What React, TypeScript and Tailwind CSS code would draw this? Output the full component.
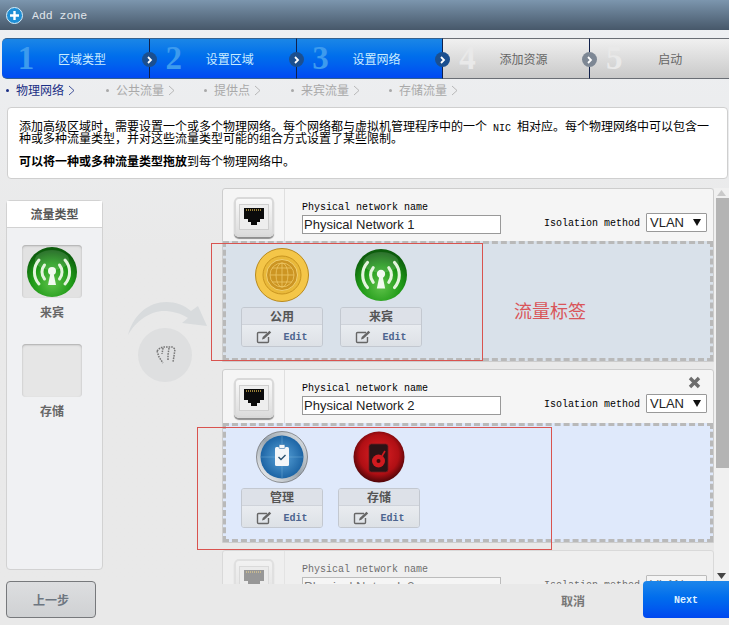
import React from "react";

const cjk = "font-['Noto_Sans_CJK_SC','Liberation_Sans',sans-serif]";
const mono = "font-['Liberation_Mono','Noto_Sans_CJK_SC',monospace]";

function Chevron({ gray }: { gray?: boolean }) {
  return (
    <span className={`absolute right-[-8px] top-[13px] z-10 flex h-[15px] w-[15px] items-center justify-center rounded-full ${gray ? "bg-[#7d8794]" : "bg-[#1b4f8f]"}`}>
      <svg width="7" height="8" viewBox="0 0 7 8"><path d="M2 1l3 3-3 3" fill="none" stroke="#fff" strokeWidth="1.8" /></svg>
    </span>
  );
}

function Step({ n, label, active, first, last }: { n: number; label: string; active?: boolean; first?: boolean; last?: boolean }) {
  return (
    <div className={`relative flex h-[41px] items-center border-y ${active ? "border-y-[#34618f] bg-gradient-to-b from-[#1b86e6] to-[#0049f2]" : "border-y-[#6a6e75] bg-gradient-to-b from-[#f0f0f0] to-[#c9c9c9]"} ${first ? "w-[148px] rounded-l-[5px]" : ""} ${last ? "w-[139px]" : ""} ${!first && !last ? "w-[147px]" : ""} ${last ? "" : "border-r border-r-[#10204a]"}`}>
      <span className={`w-[48px] text-center font-['Liberation_Serif',serif] text-[33px] font-bold leading-none ${active ? "text-[#3d9bee]" : "text-[#e9e9e9]"}`}>{n}</span>
      <span className={`w-[64px] text-center text-[12px] ${cjk} ${active ? "text-[#c9ecff]" : "text-[#666]"}`}>{label}</span>
      {!last && <Chevron gray={!active} />}
    </div>
  );
}

function Crumb({ label, active, w }: { label: string; active?: boolean; w: string }) {
  return (
    <div className={`flex items-center ${w} ${cjk} text-[12px] ${active ? "text-[#1b2f85]" : "text-[#a9a9a9]"}`}>
      <span className="mr-[7px] h-[3px] w-[3px] rounded-full bg-current" />
      <span>{label}</span>
      <svg className="ml-[4px]" width="7" height="11" viewBox="0 0 7 11"><path d="M1 1l5 4.5L1 10" fill="none" stroke="currentColor" strokeWidth="0.8" /></svg>
    </div>
  );
}

function GreenIcon({ size = 50 }: { size?: number }) {
  return (
    <svg width={size} height={size} viewBox="0 0 50 50">
      <defs>
        <radialGradient id="gr" cx="50%" cy="72%" r="65%"><stop offset="0%" stopColor="#5fc24a" /><stop offset="60%" stopColor="#1f9a17" /><stop offset="100%" stopColor="#0c5d0c" /></radialGradient>
      </defs>
      <circle cx="25" cy="25" r="25" fill="url(#gr)" />
      <ellipse cx="25" cy="13" rx="17" ry="10" fill="#fff" opacity="0.14" />
      <g fill="none" stroke="#e4f4dd" strokeLinecap="round">
        <path d="M17.5 32a11 11 0 0 1 0-14M32.5 18a11 11 0 0 1 0 14" strokeWidth="3" />
        <path d="M12 37a18 18 0 0 1 0-24M38 13a18 18 0 0 1 0 24" strokeWidth="3" />
      </g>
      <circle cx="25" cy="24" r="4" fill="#f2faef" />
      <path d="M23.5 26h3l2.5 12h-8z" fill="#f2faef" />
    </svg>
  );
}

function GoldIcon() {
  return (
    <svg width="54" height="54" viewBox="0 0 54 54">
      <circle cx="27" cy="27" r="26.5" fill="#f4c648" stroke="#b98a1e" strokeWidth="1" />
      <circle cx="27" cy="27" r="19" fill="#e9b93a" stroke="#c8941f" strokeWidth="1" />
      <circle cx="27" cy="27" r="15.5" fill="#cc9523" stroke="#f2d071" strokeWidth="1" />
      <g fill="none" stroke="#eec766" strokeWidth="0.8">
        <circle cx="27" cy="27" r="12" />
        <ellipse cx="27" cy="27" rx="6" ry="12" />
        <path d="M27 15v24M15 27h24M17 20h20M17 34h20" />
      </g>
    </svg>
  );
}

function BlueIcon() {
  return (
    <svg width="52" height="52" viewBox="0 0 52 52">
      <defs>
        <radialGradient id="bl" cx="50%" cy="50%" r="55%"><stop offset="0%" stopColor="#5aa4da" /><stop offset="100%" stopColor="#175e9f" /></radialGradient>
        <linearGradient id="si" x1="0" y1="1" x2="1" y2="0"><stop offset="0%" stopColor="#ffffff" /><stop offset="50%" stopColor="#9aa4ad" /><stop offset="100%" stopColor="#e8ecef" /></linearGradient>
      </defs>
      <circle cx="26" cy="26" r="25.5" fill="url(#si)" stroke="#555" strokeWidth="0.6" />
      <circle cx="26" cy="26" r="21.5" fill="url(#bl)" />
      <path d="M5 26h42M26 5v42" stroke="#8cc2e6" strokeWidth="0.6" opacity="0.6" />
      <rect x="19" y="16" width="14" height="19" rx="1.5" fill="#f3f6f9" />
      <rect x="23" y="13.5" width="6" height="4" rx="1" fill="#f3f6f9" stroke="#2c6ea8" strokeWidth="0.6" />
      <path d="M22.5 26l2.5 2.5 4.5-4.5" fill="none" stroke="#29506f" strokeWidth="1.4" />
    </svg>
  );
}

function RedIcon() {
  return (
    <svg width="52" height="52" viewBox="0 0 52 52">
      <defs>
        <radialGradient id="rd" cx="50%" cy="45%" r="55%"><stop offset="0%" stopColor="#e02226" /><stop offset="70%" stopColor="#b00f14" /><stop offset="100%" stopColor="#4e0508" /></radialGradient>
      </defs>
      <circle cx="26" cy="26" r="25.5" fill="url(#rd)" />
      <rect x="16" y="13" width="19" height="28" rx="2.5" fill="#2b1316" stroke="#6e1c20" strokeWidth="0.8" />
      <circle cx="25.5" cy="30" r="6.5" fill="#d01a1f" />
      <circle cx="25.5" cy="30" r="2" fill="#3a0a0c" />
      <path d="M29 25l3-5" stroke="#d01a1f" strokeWidth="1.6" />
    </svg>
  );
}

function PortTile({ faded }: { faded?: boolean }) {
  return (
    <div className="flex h-[40px] w-[40px] items-center justify-center rounded-[5px] border-2 border-[#d9d9d9] bg-gradient-to-b from-[#fafafa] to-[#dcdcdc] shadow-[0_2px_1px_#8e8e8e]">
      <div className="flex h-[26px] w-[30px] items-center justify-center border border-[#cfcfcf] bg-[#eeeeee]">
        <svg width="22" height="18" viewBox="0 0 22 18">
          <path d="M1 0h20v11h-4v3h-3v3H8v-3H5v-3H1z" fill={faded ? "#555" : "#0b0b0b"} />
          <path d="M3 2h16" stroke="#c9a848" strokeWidth="1.4" strokeDasharray="1 1" />
        </svg>
      </div>
    </div>
  );
}

function EditGlyph() {
  return (
    <svg width="17" height="14" viewBox="0 0 17 14">
      <path d="M11 2.5H2.5a1 1 0 0 0-1 1v8a1 1 0 0 0 1 1h9a1 1 0 0 0 1-1V7" fill="none" stroke="#666" strokeWidth="1.4" />
      <path d="M6 9.5l.7-2.4L13.5 0.8l1.7 1.7L8.4 8.8z" fill="#666" />
    </svg>
  );
}

function Tag({ icon, label, tight }: { icon: React.ReactNode; label: string; tight?: boolean }) {
  return (
    <div className="flex w-[82px] flex-col items-center">
      <div className="flex h-[54px] w-full items-center justify-center">{icon}</div>
      <div className={`${tight ? "mt-[4px]" : "mt-[5px]"} w-full overflow-hidden rounded-[3px] border border-[#c3c8d0]`}>
        <div className={`flex h-[17px] items-center justify-center border-b border-b-[#cfd3da] bg-[#dde1e8] text-[12px] font-bold text-[#555] ${cjk}`}>{label}</div>
        <div className="flex h-[21px] items-center justify-center gap-[10px] bg-gradient-to-b from-[#e9ecf0] to-[#dde1e6] pt-[3px]">
          <EditGlyph />
          <span className={`text-[10px] font-bold text-[#4c648f] ${mono}`}>Edit</span>
        </div>
      </div>
    </div>
  );
}

function Network({ name, tags, close, dropBg, gap, faded, dropH, topH, pb }: { name: string; tags?: React.ReactNode; close?: boolean; dropBg?: string; gap?: string; faded?: boolean; dropH?: string; topH: string; pb: string }) {
  return (
    <div className={`relative mb-[7px] w-[492px] rounded-t-[3px] border border-[#cdcdcd] bg-[#f5f5f5] ${faded ? "opacity-55" : ""}`}>
      <div className={`flex ${topH}`}>
        <div className="flex w-[62px] justify-center border-r border-r-[#dfdfdf] pt-[8px]"><PortTile faded={faded} /></div>
        <div className={`flex flex-1 items-end ${pb} pl-[17px]`}>
          <div className="flex flex-col">
            <span className={`text-[10px] leading-[12px] text-black ${mono}`}>Physical network name</span>
            <input readOnly value={name} className="mt-[1px] h-[19px] w-[199px] border border-[#999] bg-white pl-[1px] font-['Liberation_Sans',sans-serif] text-[13px] leading-none text-[#222] outline-none" />
          </div>
          <div className="ml-[43px] flex items-center pb-[2px]">
            <span className={`mr-[6px] mt-[2px] text-[10px] text-black ${mono}`}>Isolation method</span>
            <div className="flex h-[19px] w-[61px] items-center justify-between rounded-[1px] border border-[#999] bg-white pl-[3px] pr-[5px] font-['Liberation_Sans',sans-serif] text-[13px] leading-none text-[#222]">
              <span>VLAN</span>
              <svg width="8" height="7" viewBox="0 0 8 7"><path d="M0 0h8L4 7z" fill="#111" /></svg>
            </div>
          </div>
        </div>
      </div>
      {close && (
        <svg className="absolute right-[12px] top-[6px]" width="13" height="13" viewBox="0 0 13 13"><path d="M2 2l9 9M11 2l-9 9" stroke="#6d6d6d" strokeWidth="3.4" /></svg>
      )}
      {tags && (
        <div className={`flex ${dropH} ${gap} border-[3px] border-dashed border-[#b9b9b9] pl-[15px] pt-[4px] ${dropBg}`}>{tags}</div>
      )}
    </div>
  );
}

export default function App() {
  return (
    <div className={`relative flex h-[625px] w-[729px] flex-col overflow-hidden bg-gradient-to-b from-[#eef0f3] via-[#e9e9e9] via-40% to-[#e9e9e9] ${cjk}`}>
      <header className="flex h-[30px] items-center bg-gradient-to-b from-[#7c96ae] to-[#47586a] pl-[6px]">
        <span className="flex h-[17px] w-[17px] items-center justify-center rounded-full border border-[#d7eefa] bg-[#1f8fd6]">
          <svg width="11" height="11" viewBox="0 0 11 11"><path d="M5.5 1v9M1 5.5h9" stroke="#fff" strokeWidth="2.4" /></svg>
        </span>
        <span className={`ml-[9px] pt-[2px] text-[11.5px] text-[#e0e6eb] ${mono}`}>Add zone</span>
      </header>

      <nav className="ml-[2px] mt-[8px] flex">
        <Step n={1} label="区域类型" active first />
        <Step n={2} label="设置区域" active />
        <Step n={3} label="设置网络" active />
        <Step n={4} label="添加资源" />
        <Step n={5} label="启动" last />
      </nav>

      <div className="ml-[6px] flex h-[22px] items-center">
        <Crumb label="物理网络" active w="w-[100px]" />
        <Crumb label="公共流量" w="w-[98px]" />
        <Crumb label="提供点" w="w-[87px]" />
        <Crumb label="来宾流量" w="w-[98px]" />
        <Crumb label="存储流量" w="w-[90px]" />
      </div>

      <section className="ml-[7px] mr-[1px] mt-[6px] h-[72px] rounded-[4px] border border-[#cfcfcf] bg-white pl-[11px] pr-[8px] pt-[12px] text-[12px] leading-[12px] text-black">
        <p>添加高级区域时，需要设置一个或多个物理网络。每个网络都与虚拟机管理程序中的一个<span className={`text-[10px] leading-[0] ${mono}`}> NIC </span>相对应。每个物理网络中可以包含一种或多种流量类型，并对这些流量类型可能的组合方式设置了某些限制。</p>
        <p className="mt-[11px]"><b>可以将一种或多种流量类型拖放</b>到每个物理网络中。</p>
      </section>

      <main className="mt-[9px] flex h-[396px] overflow-hidden">
        <aside className="ml-[6px] mt-[12px] h-[370px] w-[97px] shrink-0 rounded-[4px] border border-[#d2d2d2] bg-[#f0f1f3]">
          <div className="flex h-[27px] items-center justify-center border-b border-b-[#d2d2d2] bg-white text-[12px] font-bold text-[#555]">流量类型</div>
          <div className="flex flex-col items-center pr-[5px] pt-[17px]">
            <div className="flex h-[53px] w-[60px] items-center justify-center rounded-[4px] bg-[#e2e2e2] shadow-[inset_0_1px_2px_#aaa]"><GreenIcon /></div>
            <span className="mt-[5px] h-[41px] text-[12px] font-bold text-[#666]">来宾</span>
            <div className="h-[53px] w-[60px] rounded-[4px] bg-[#e6e6e6] shadow-[inset_0_1px_2px_#aaa]" />
            <span className="mt-[5px] text-[12px] font-bold text-[#666]">存储</span>
          </div>
        </aside>

        <div className="flex w-[119px] shrink-0 flex-col items-center pl-[11px] pt-[113px]">
          <svg width="80" height="36" viewBox="0 0 80 36"><path d="M0 34C6 12 22 1 38 1c10 0 18 3 25 9l7-5 9 20-25-3 6-5c-8-5-16-7-24-7C22 10 8 20 0 34z" fill="#d8dbdd" /></svg>
          <div className="relative mr-[6px] mt-[-9px] flex h-[54px] w-[54px] items-center justify-center rounded-full bg-[#dedfe0]">
            <svg width="22" height="20" viewBox="0 0 22 20"><path d="M3 6l3-3 3-1 4 0 5 0 3 2-1 7-1 6M15 3l-1 7v6M9 3l-1 6M3 6l2 6 4 6" fill="none" stroke="#777" strokeWidth="1.5" strokeDasharray="1.6 1" /></svg>
          </div>
        </div>

        <div className="flex w-[492px] shrink-0 flex-col">
          <Network
            name="Physical Network 1"
            topH="h-[52px]"
            pb="pb-[7px]"
            dropH="h-[120px]"
            dropBg="bg-[#d9e1ea]"
            gap="gap-[17px]"
            tags={<><Tag icon={<GoldIcon />} label="公用" /><Tag icon={<GreenIcon size={52} />} label="来宾" /></>}
          />
          <Network
            name="Physical Network 2"
            close
            topH="h-[53px]"
            pb="pb-[8px]"
            dropH="h-[119px]"
            dropBg="bg-[#dfe9fb]"
            gap="gap-[15px]"
            tags={<><Tag tight icon={<BlueIcon />} label="管理" /><Tag tight icon={<RedIcon />} label="存储" /></>}
          />
          <Network name="Physical Network 3" faded topH="h-[52px]" pb="pb-[7px]" />
        </div>

        <div className="flex w-[15px] shrink-0 flex-col items-center bg-[#f0f0f0]">
          <svg className="mt-[2px]" width="9" height="6" viewBox="0 0 9 6"><path d="M0 6l4.5-6L9 6z" fill="#c9c9c9" /></svg>
          <div className="mt-[2px] h-[270px] w-[13px] self-end bg-[#b4b4b4]" />
          <div className="flex-1" />
          <svg className="mb-[5px]" width="9" height="6" viewBox="0 0 9 6"><path d="M0 0l4.5 6L9 0z" fill="#444" /></svg>
        </div>
      </main>

      <footer className="relative flex h-[41px] items-start bg-[#e9e9e9] pl-[6px]">
        <button className="mt-[-3px] flex h-[37px] w-[90px] items-center justify-center rounded-[4px] border border-[#77797c] bg-gradient-to-b from-[#dddee0] to-[#cfd1d3] text-[12px] font-bold text-[#6d7680]">上一步</button>
        <span className="ml-[465px] mt-[8px] text-[12px] font-bold text-[#777]">取消</span>
        <button className={`mt-[-3px] ml-[58px] flex h-[37px] w-[86px] items-center justify-center rounded-l-[4px] bg-gradient-to-b from-[#1c86ea] to-[#0047f0] pt-[2px] text-[10px] font-bold text-[#dff1ff] ${mono}`}>Next</button>
      </footer>

      <div className="absolute left-[211px] top-[243px] h-[118px] w-[272px] border border-[#d9534f]" />
      <div className="absolute left-[197px] top-[427px] h-[123px] w-[355px] border border-[#d9534f]" />
      <span className="absolute left-[514px] top-[298px] text-[18px] leading-[24px] text-[#d9555a]">流量标签</span>
    </div>
  );
}
